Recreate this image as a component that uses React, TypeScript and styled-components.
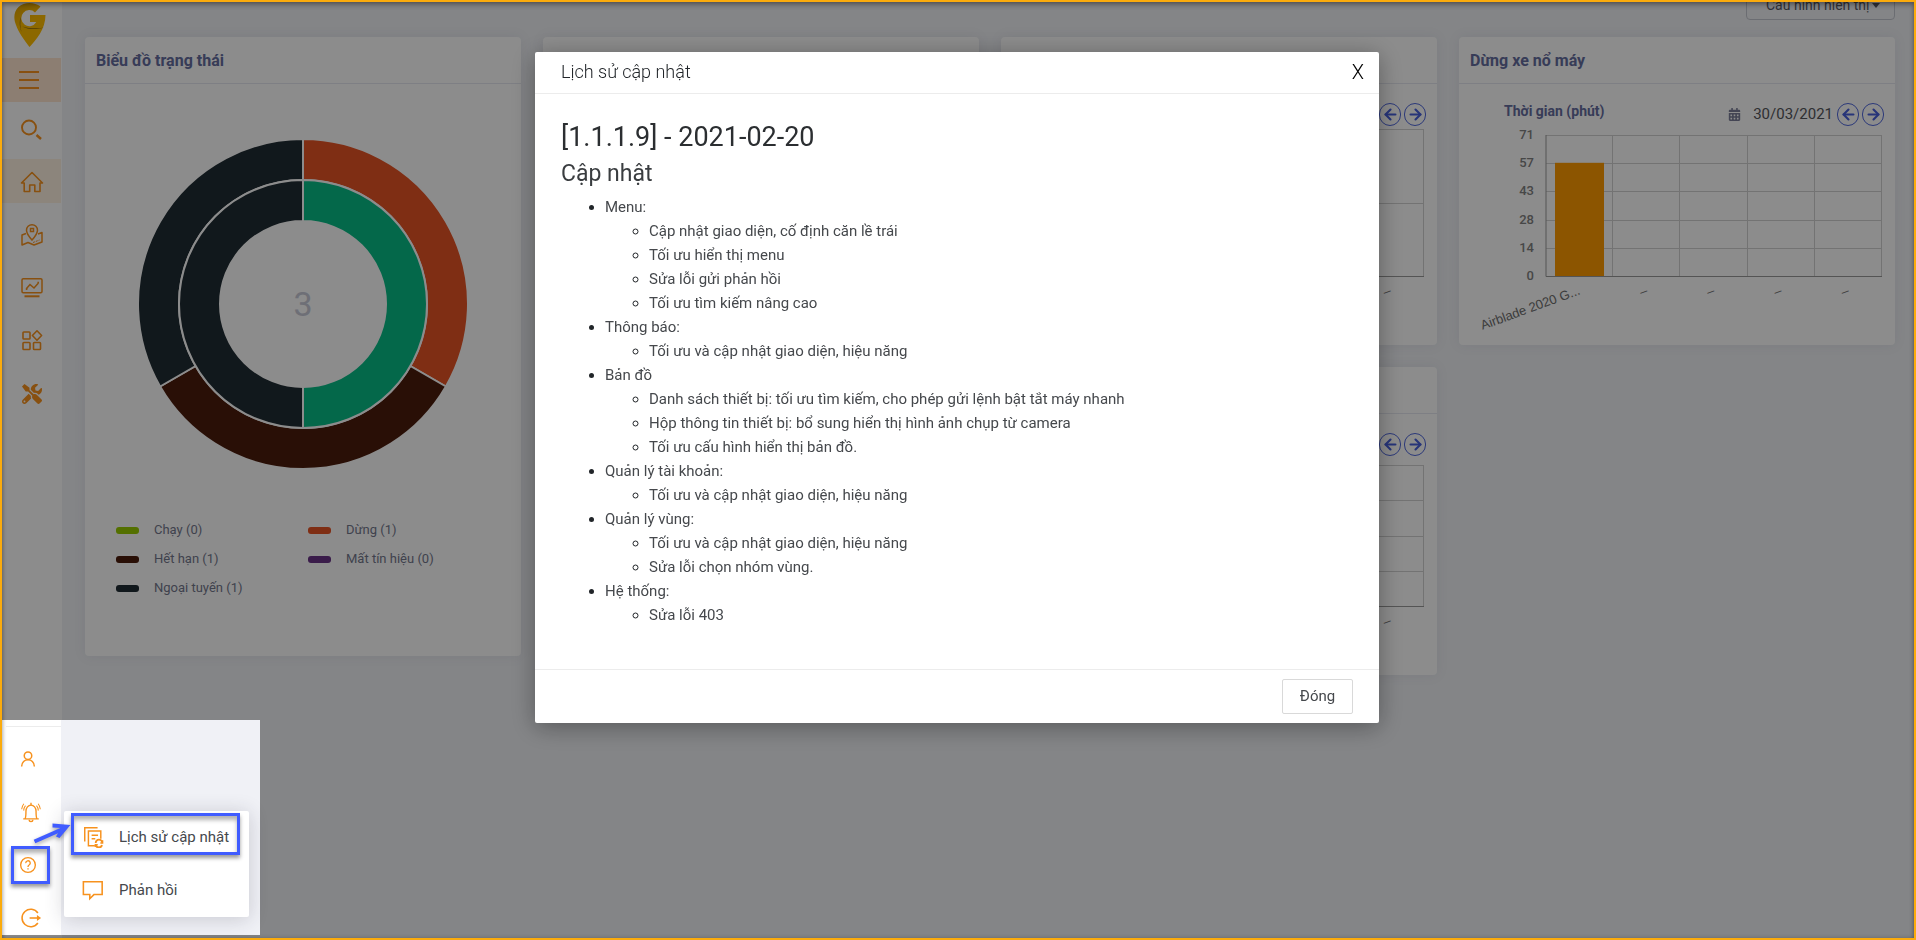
import React from "react";
import styled, { createGlobalStyle } from "styled-components";
import { FaCalendarAlt, FaTools } from "react-icons/fa";
import { ArrowLeft, ArrowRight } from "lucide-react";

const ORANGE = "#f7921e";
const BLUE = "#405cff";

const GlobalStyle = createGlobalStyle`
  *, *::before, *::after { box-sizing: border-box; }
  body {
    margin: 0;
    background: #f0f2f6;
    font-family: Roboto, "Liberation Sans", sans-serif;
    font-size: 15px;
    color: #212529;
  }
  button { font-family: inherit; cursor: pointer; }
  h1, h2, h3, ul { margin: 0; padding: 0; }
`;

const Page = styled.div`
  display: flex;
  min-height: 100vh;
  padding: 2px;
`;

const Frame = styled.div`
  position: fixed;
  inset: 0;
  z-index: 40;
  border: 2px solid #fbab0c;
  box-shadow: inset 0 3px 5px rgba(0, 0, 0, 0.3), inset 0 0 4px rgba(0, 0, 0, 0.2);
  pointer-events: none;
`;

/* ---------- sidebar ---------- */

const Sidebar = styled.aside`
  flex: 0 0 60px;
  background: #fff;
  display: flex;
  flex-direction: column;
`;

const Brand = styled.a`
  display: flex;
  justify-content: center;
  height: 56px;
  padding-right: 4px;
`;

const Toggle = styled.button`
  display: flex;
  align-items: center;
  height: 44px;
  margin: 0 1px 4px 0;
  padding: 0 0 0 16px;
  border: 0;
  background: #ffe6cf;
  color: ${ORANGE};
`;

const NavList = styled.nav`
  display: flex;
  flex-direction: column;
  gap: 9px;
`;

const NavItem = styled.a<{ $active?: boolean }>`
  display: flex;
  align-items: center;
  justify-content: center;
  height: 44px;
  margin-right: 1px;
  padding-top: 2px;
  color: ${ORANGE};
  background: ${(p) => (p.$active ? "#fff3e2" : "transparent")};
`;

/* ---------- content ---------- */

const Main = styled.main`
  flex: 1;
  min-width: 0;
  padding: 0 19px 0 23px;
`;

const Toolbar = styled.div`
  display: flex;
  justify-content: flex-end;
  align-items: flex-end;
  height: 18px;
  margin-bottom: 17px;
`;

const ConfigButton = styled.button`
  flex: none;
  display: flex;
  align-items: center;
  justify-content: space-between;
  width: 149px;
  height: 30px;
  padding: 0 14px 0 19px;
  border: 1px solid #c4c7cf;
  border-radius: 4px;
  background: transparent;
  color: #5a5b66;
  font-size: 14px;
`;

const Grid = styled.div`
  display: grid;
  grid-template-columns: repeat(4, minmax(0, 1fr));
  gap: 22px;
  align-items: start;
`;

const Column = styled.div`
  display: flex;
  flex-direction: column;
  gap: 22px;
`;

const Card = styled.section<{ $tall?: boolean }>`
  height: ${(p) => (p.$tall ? 619 : 308)}px;
  background: #fff;
  border-radius: 4px;
  box-shadow: 0 0 13px rgba(82, 63, 105, 0.08);
`;

const CardTitle = styled.h3`
  height: 47px;
  padding: 0 11px;
  border-bottom: 1px solid #e6e8f0;
  line-height: 48px;
  font-size: 16px;
  font-weight: 700;
  color: #656d9f;
`;

const Doughnut = styled.svg`
  display: block;
  width: 100%;
  height: 432px;
`;

const Legend = styled.ul`
  display: grid;
  grid-template-columns: 192px 1fr;
  row-gap: 5px;
  padding: 2px 31px;
  list-style: none;
`;

const LegendItem = styled.li`
  display: flex;
  align-items: center;
  gap: 15px;
  line-height: 24px;
  font-size: 13px;
  color: #74788d;
`;

const Swatch = styled.span<{ $color: string }>`
  width: 23px;
  height: 7px;
  border-radius: 3px;
  background: ${(p) => p.$color};
`;

const ChartHead = styled.div`
  display: flex;
  align-items: center;
  height: 44px;
  padding: 16px 11px 0 45px;
`;

const ChartLabel = styled.span`
  flex: 1;
  padding-bottom: 6px;
  font-size: 14px;
  font-weight: 700;
  color: #656d9f;
`;

const DateText = styled.span`
  display: flex;
  align-items: center;
  gap: 12px;
  margin-right: 4px;
  font-size: 15px;
  color: #55565c;
  svg { color: #7c7f99; }
`;

const RoundButton = styled.button`
  display: flex;
  align-items: center;
  justify-content: center;
  width: 22px;
  height: 23px;
  margin-right: 3px;
  padding: 0;
  border: 1px solid #5068dc;
  border-radius: 11px;
  background: transparent;
  color: #4760dc;
  &:last-child { margin-right: 0; }
`;

const Plot = styled.svg`
  display: block;
  width: 100%;
  overflow: visible;
  font-family: Roboto, sans-serif;
`;

/* ---------- modal ---------- */

const Mask = styled.div`
  position: fixed;
  inset: 0;
  z-index: 10;
  display: flex;
  justify-content: center;
  align-items: flex-start;
  padding: 52px 2px 0 0;
  background: rgba(0, 0, 0, 0.45);
`;

const Dialog = styled.div`
  width: 844px;
  background: #fff;
  border-radius: 2px;
  box-shadow: 0 4px 24px rgba(0, 0, 0, 0.35);
`;

const DialogHead = styled.header`
  display: flex;
  align-items: center;
  justify-content: space-between;
  height: 42px;
  padding: 0 15px 1px 26px;
  border-bottom: 1px solid #ececec;
`;

const DialogTitle = styled.h1`
  font-size: 18px;
  font-weight: 300;
  line-height: 24px;
`;

const CloseButton = styled.button`
  padding: 0;
  border: 0;
  background: none;
  font-size: 20px;
  font-weight: 300;
  line-height: 24px;
  color: #000;
`;

const DialogBody = styled.div`
  padding: 23px 26px 42px;
`;

const Version = styled.h2`
  font-size: 27px;
  font-weight: 400;
  line-height: 40px;
  color: #2b2e31;
`;

const Section = styled.h3`
  margin-bottom: 4px;
  font-size: 23px;
  font-weight: 400;
  line-height: 34px;
  color: #3a3d40;
`;

const Changes = styled.ul`
  padding-left: 44px;
  line-height: 24px;
  font-size: 15px;
  color: #45484c;
  li::marker { color: #212529; }
`;

const DialogFoot = styled.footer`
  display: flex;
  justify-content: flex-end;
  padding: 9px 26px;
  border-top: 1px solid #ececec;
`;

const ActionButton = styled.button`
  width: 71px;
  height: 35px;
  padding: 0 0 2px;
  border: 1px solid #d9d9d9;
  border-radius: 2px;
  background: #fff;
  font-size: 15px;
  color: #45484c;
`;

/* ---------- highlighted help area ---------- */

const Spotlight = styled.div`
  position: fixed;
  left: 2px;
  bottom: 5px;
  z-index: 20;
  display: flex;
  width: 258px;
  height: 215px;
  background: #f0f1f6;
`;

const UserNav = styled.nav`
  width: 59px;
  padding-top: 6px;
  background: #fff;
`;

const UserNavList = styled.div`
  display: flex;
  flex-direction: column;
  gap: 9px;
  margin-left: 4px;
  padding-top: 10px;
  border-top: 1px solid #ececec;
`;

const UserItem = styled.a<{ $wide?: boolean }>`
  display: flex;
  align-items: center;
  justify-content: center;
  height: 44px;
  padding-right: ${(p) => (p.$wide ? 6 : 11)}px;
  color: ${ORANGE};
`;

const Popup = styled.div`
  position: absolute;
  left: 62px;
  top: 91px;
  width: 185px;
  background: #fff;
  border-radius: 2px;
  box-shadow: 0 2px 20px rgba(40, 40, 60, 0.2);
`;

const PopupItem = styled.a`
  display: flex;
  align-items: center;
  gap: 15px;
  height: 53px;
  padding: 0 0 1px 18px;
  font-size: 15px;
  color: #45484c;
  text-decoration: none;
  svg { color: ${ORANGE}; }
`;

const Marker = styled.div<{ $x: number; $y: number; $w: number; $h: number }>`
  position: absolute;
  left: ${(p) => p.$x}px;
  top: ${(p) => p.$y}px;
  width: ${(p) => p.$w}px;
  height: ${(p) => p.$h}px;
  border: 3px solid ${BLUE};
  box-shadow: 0 3px 4px rgba(0, 0, 0, 0.4), inset 0 4px 4px rgba(0, 0, 0, 0.3);
  pointer-events: none;
`;

const Pointer = styled.svg`
  position: absolute;
  left: 28px;
  top: 100px;
  filter: drop-shadow(0 2px 2px rgba(0, 0, 0, 0.35));
`;

/* ---------- icons ---------- */

function Icon({ size = 24, width = 1.6, children }: { size?: number; width?: number; children: React.ReactNode }) {
  return (
    <svg width={size} height={size} viewBox="0 0 24 24" fill="none" stroke="currentColor" strokeWidth={width} aria-hidden="true">
      {children}
    </svg>
  );
}

const Logo = () => (
  <svg width="32" height="46" viewBox="0 0 32 46" aria-hidden="true">
    <defs>
      <linearGradient id="pin" x1="0" y1="0" x2="0.4" y2="1">
        <stop offset="0" stopColor="#dc9f00" />
        <stop offset="0.5" stopColor="#ffbd00" />
      </linearGradient>
    </defs>
    <path d="M26.500 4.500C21 0 10 -0.500 4.500 5C-0.500 10 -0.500 17 2 23C4.500 30 10 38 15.500 45C22 38 31.500 27 31.500 13H16V20H22.300A8 8 0 1 1 21 10.500Z" fill="url(#pin)" />
    <path d="M7 15C6 20 6 25 7.500 30C5.500 25 5 19 7 15ZM8 24.500C15 26.500 22 27 30 25.500C22 28 14 27.500 8 24.500Z" fill="#8a6a10" />
  </svg>
);

const MenuIcon = () => (
  <Icon width={2}>
    <path d="M1 4H21M1 12H21M1 20H21" />
  </Icon>
);
const SearchIcon = () => (
  <Icon width={1.900}>
    <circle cx="9" cy="10.500" r="7" />
    <path d="M16.500 18L21 22" strokeWidth={2.400} />
  </Icon>
);
const HomeIcon = () => (
  <Icon>
    <path d="M1.500 13L12 2.500L22.500 13H20V21.500H14.800V15H9.700V21.500H4.200V13Z" strokeLinejoin="round" />
  </Icon>
);
const MapIcon = () => (
  <Icon width={1.500}>
    <path d="M12 17C8 12.500 6.500 10 6.500 7.200A5.500 5.500 0 0 1 17.500 7.200C17.500 10 16 12.500 12 17Z" />
    <rect x="10.500" y="5.500" width="3" height="3" />
    <path d="M6 10.500L2 12V22L8 19.500L14 22L22 19V9.500L18 11" strokeLinejoin="round" />
    <path d="M13 19.500L19.500 17" strokeWidth={1} strokeDasharray="2 1" />
  </Icon>
);
const MonitorIcon = () => (
  <Icon width={1.500}>
    <rect x="2" y="2.800" width="20" height="14" rx="1.200" />
    <path d="M4.500 20.300H19.500" strokeWidth={2} />
    <path d="M6.500 12.500L10 8.500L14 12L18 7.500" />
    <path d="M5.800 13H7.400M17.400 6.800H19" strokeWidth={2} />
  </Icon>
);
const AppsIcon = () => (
  <Icon width={1.600}>
    <rect x="3" y="3" width="7" height="7" rx="0.800" />
    <rect x="3" y="13.500" width="7" height="7" rx="0.800" />
    <rect x="13.500" y="13.500" width="7" height="7" rx="0.800" />
    <path d="M17 1.800L21.600 6.500L17 11.200L12.400 6.500Z" strokeLinejoin="round" />
  </Icon>
);
const UserIcon = () => (
  <Icon size={18} width={2}>
    <circle cx="12" cy="7.500" r="5" />
    <path d="M3.500 22C3.500 10 20.500 10 20.500 22" />
  </Icon>
);
const BellIcon = () => (
  <Icon size={22} width={1.500}>
    <path d="M3.500 19.500H20.500M5.500 19.500C6.500 18 6.500 15 6.500 11A5.500 6.500 0 0 1 17.500 11C17.500 15 17.500 18 18.500 19.500" />
    <path d="M12 2V4.500M10 20.500A2 2 0 0 0 14 20.500" />
    <path d="M6 5Q4.200 7 4 10.500M4.200 3Q2.200 5.500 1.800 9M18 5Q19.800 7 20 10.500M19.800 3Q21.800 5.500 22.200 9" strokeWidth={1.100} />
  </Icon>
);
const HelpIcon = () => (
  <Icon size={18} width={1.800}>
    <circle cx="12" cy="12" r="9.800" />
    <path d="M9 9.500A3 3 0 1 1 13.500 12C12.300 12.700 12 13.300 12 14.500M12 16.200V18" />
  </Icon>
);
const LogoutIcon = () => (
  <Icon size={22} width={1.700}>
    <path d="M19.500 6.500A9.500 9.500 0 1 0 19.500 17.500" />
    <path d="M10.500 12H20" />
    <path d="M18.500 8.800L23 12L18.500 15.200Z" fill="currentColor" stroke="none" />
  </Icon>
);
const HistoryIcon = () => (
  <Icon size={22} width={1.600}>
    <path d="M3 17V2H17" />
    <path d="M14 21.500H7V5.500H20.500V14" />
    <path d="M10.500 10H17.500M10.500 14H14.500" />
    <path d="M22.500 15.500V18.500H20M14.500 23V20.500H17.200" strokeWidth={1.500} />
    <path d="M15 18.500A3.500 3.500 0 0 1 22 18.300M15 20.800A3.500 3.500 0 0 0 21.800 20.800" strokeWidth={2} />
  </Icon>
);
const BubbleIcon = () => (
  <Icon size={22} width={1.700}>
    <path d="M1.500 3H22V17H13L8.500 21.500V17H1.500Z" />
  </Icon>
);

/* ---------- charts ---------- */

function ring(r0: number, r1: number, from: number, to: number) {
  const pt = (r: number, a: number) => {
    const t = ((a - 90) * Math.PI) / 180;
    return `${(218 + r * Math.cos(t)).toFixed(2)} ${(220 + r * Math.sin(t)).toFixed(2)}`;
  };
  const large = to - from > 180 ? 1 : 0;
  return `M${pt(r1, from)}A${r1} ${r1} 0 ${large} 1 ${pt(r1, to)}L${pt(r0, to)}A${r0} ${r0} 0 ${large} 0 ${pt(r0, from)}Z`;
}

const slices = [
  { r: [124, 165], a: [0, 120], color: "#e85426" },
  { r: [124, 165], a: [120, 240], color: "#4c1c0c" },
  { r: [124, 165], a: [240, 360], color: "#202c33" },
  { r: [83, 124], a: [0, 180], color: "#09bd88" },
  { r: [83, 124], a: [180, 360], color: "#202c33" },
];

const legend = [
  { label: "Chạy (0)", color: "#9acd00" },
  { label: "Dừng (1)", color: "#e85426" },
  { label: "Hết hạn (1)", color: "#4c1c0c" },
  { label: "Mất tín hiệu (0)", color: "#6a3488" },
  { label: "Ngoại tuyến (1)", color: "#202c33" },
];

function StatusChart() {
  return (
    <>
      <Doughnut viewBox="0 0 436 432" role="img" aria-label="Biểu đồ trạng thái">
        {slices.map((s, i) => (
          <path key={i} d={ring(s.r[0], s.r[1], s.a[0], s.a[1])} fill={s.color} stroke="#fff" strokeWidth="2" />
        ))}
        <text x="218" y="232" textAnchor="middle" fontSize="34" fill="#c8cad8">3</text>
      </Doughnut>
      <Legend>
        {legend.map((l) => (
          <LegendItem key={l.label}>
            <Swatch $color={l.color} />
            {l.label}
          </LegendItem>
        ))}
      </Legend>
    </>
  );
}

const LEFT = 87;
const RIGHT = 423;
const BOTTOM = 148;

interface BarProps {
  top: number;
  ticks: string[];
  values?: number[];
  names: string[];
  max: number;
}

function BarChart({ top, ticks, values = [], names, max }: BarProps) {
  const step = (RIGHT - LEFT) / 5;
  const rows = ticks.length - 1;
  return (
    <Plot viewBox="0 0 436 217">
      <g stroke="#d2d2d2" strokeWidth="1">
        {ticks.map((t, i) => {
          const y = Math.round(top + ((BOTTOM - top) * i) / rows) + 0.5;
          return <line key={t} x1={LEFT} x2={RIGHT} y1={y} y2={y} />;
        })}
        {[1, 2, 3, 4, 5].map((i) => {
          const x = Math.round(LEFT + step * i) - 0.5;
          return <line key={i} x1={x} x2={x} y1={top} y2={BOTTOM} />;
        })}
      </g>
      {values.map((v, i) => {
        const h = ((BOTTOM - top) * v) / max;
        return <rect key={i} x={LEFT + step * i + 9} y={BOTTOM - h} width="49" height={h} fill="#ff9c00" />;
      })}
      <path d={`M${LEFT} ${top}V${BOTTOM}.5H${RIGHT}`} fill="none" stroke="#9a9a9a" strokeWidth="1" />
      {ticks.map((t, i) => (
        <text key={t} x="75" y={top + ((BOTTOM - top) * i) / rows + 4} textAnchor="end" fontSize="13" fontWeight="500" fill="#828282">
          {t}
        </text>
      ))}
      {names.map((n, i) => {
        const x = LEFT + step * i + 35;
        return (
          <text key={i} x={x} y={BOTTOM + 18} transform={`rotate(-20 ${x} ${BOTTOM + 18})`} textAnchor="end" fontSize="13" fontFamily="Liberation Sans" fill="#6e6e6e">
            {n}
          </text>
        );
      })}
    </Plot>
  );
}

function ChartCard({ title, label, ...bars }: BarProps & { title: string; label: string }) {
  return (
    <Card>
      <CardTitle>{title}</CardTitle>
      <ChartHead>
        <ChartLabel>{label}</ChartLabel>
        <DateText>
          <FaCalendarAlt size={13} />
          30/03/2021
        </DateText>
        <RoundButton aria-label="Ngày trước"><ArrowLeft size={17} strokeWidth={3} /></RoundButton>
        <RoundButton aria-label="Ngày sau"><ArrowRight size={17} strokeWidth={3} /></RoundButton>
      </ChartHead>
      <BarChart {...bars} />
    </Card>
  );
}

/* ---------- data ---------- */

const changes = [
  { name: "Menu:", items: ["Cập nhật giao diện, cố định căn lề trái", "Tối ưu hiển thị menu", "Sửa lỗi gửi phản hồi", "Tối ưu tìm kiếm nâng cao"] },
  { name: "Thông báo:", items: ["Tối ưu và cập nhật giao diện, hiệu năng"] },
  {
    name: "Bản đồ",
    items: [
      "Danh sách thiết bị: tối ưu tìm kiếm, cho phép gửi lệnh bật tắt máy nhanh",
      "Hộp thông tin thiết bị: bổ sung hiển thị hình ảnh chụp từ camera",
      "Tối ưu cấu hình hiển thị bản đồ.",
    ],
  },
  { name: "Quản lý tài khoản:", items: ["Tối ưu và cập nhật giao diện, hiệu năng"] },
  { name: "Quản lý vùng:", items: ["Tối ưu và cập nhật giao diện, hiệu năng", "Sửa lỗi chọn nhóm vùng."] },
  { name: "Hệ thống:", items: ["Sửa lỗi 403"] },
];

const navItems = [
  { name: "Tìm kiếm", icon: <SearchIcon /> },
  { name: "Trang chủ", icon: <HomeIcon />, active: true },
  { name: "Bản đồ", icon: <MapIcon /> },
  { name: "Giám sát", icon: <MonitorIcon /> },
  { name: "Tiện ích", icon: <AppsIcon /> },
  { name: "Công cụ", icon: <FaTools size={20} /> },
];

const dashes = ["–", "–", "–", "–", "–"];

export default function App() {
  return (
    <>
      <GlobalStyle />
      <Page>
        <Sidebar>
          <Brand href="#" aria-label="Trang chủ"><Logo /></Brand>
          <Toggle aria-label="Thu gọn menu"><MenuIcon /></Toggle>
          <NavList>
            {navItems.map((n) => (
              <NavItem key={n.name} href="#" aria-label={n.name} $active={n.active}>{n.icon}</NavItem>
            ))}
          </NavList>
        </Sidebar>
        <Main>
          <Toolbar>
            <ConfigButton>
              Cấu hình hiển thị
              <svg width="8" height="5" viewBox="0 0 8 5" aria-hidden="true"><path d="M0 0H8L4 5Z" fill="currentColor" /></svg>
            </ConfigButton>
          </Toolbar>
          <Grid>
            <Card $tall>
              <CardTitle>Biểu đồ trạng thái</CardTitle>
              <StatusChart />
            </Card>
            <Card />
            <Column>
              <ChartCard title="" label="" top={1} max={2} ticks={["2", "1", "0"]} names={dashes} />
              <ChartCard title="" label="" top={7} max={4} ticks={["4", "3", "2", "1", "0"]} names={dashes} />
            </Column>
            <ChartCard
              title="Dừng xe nổ máy"
              label="Thời gian (phút)"
              top={7}
              max={71}
              ticks={["71", "57", "43", "28", "14", "0"]}
              values={[57]}
              names={["Airblade 2020 G...", "–", "–", "–", "–"]}
            />
          </Grid>
        </Main>
      </Page>

      <Mask>
        <Dialog role="dialog" aria-modal="true" aria-labelledby="history-title">
          <DialogHead>
            <DialogTitle id="history-title">Lịch sử cập nhật</DialogTitle>
            <CloseButton aria-label="Đóng cửa sổ">X</CloseButton>
          </DialogHead>
          <DialogBody>
            <Version>[1.1.1.9] - 2021-02-20</Version>
            <Section>Cập nhật</Section>
            <Changes>
              {changes.map((c) => (
                <li key={c.name}>
                  {c.name}
                  <Changes>
                    {c.items.map((t) => <li key={t}>{t}</li>)}
                  </Changes>
                </li>
              ))}
            </Changes>
          </DialogBody>
          <DialogFoot>
            <ActionButton>Đóng</ActionButton>
          </DialogFoot>
        </Dialog>
      </Mask>

      <Spotlight>
        <UserNav>
          <UserNavList>
            <UserItem href="#" aria-label="Tài khoản"><UserIcon /></UserItem>
            <UserItem href="#" aria-label="Thông báo" $wide><BellIcon /></UserItem>
            <UserItem href="#" aria-label="Trợ giúp"><HelpIcon /></UserItem>
            <UserItem href="#" aria-label="Đăng xuất" $wide><LogoutIcon /></UserItem>
          </UserNavList>
        </UserNav>
        <Popup>
          <PopupItem href="#"><HistoryIcon />Lịch sử cập nhật</PopupItem>
          <PopupItem href="#"><BubbleIcon />Phản hồi</PopupItem>
        </Popup>
        <Marker $x={69} $y={93} $w={169} $h={42} />
        <Marker $x={9} $y={126} $w={39} $h={38} />
        <Pointer width="44" height="28" viewBox="0 0 44 28" aria-hidden="true">
          <path d="M4.500 21.500L34 8.500" stroke={BLUE} strokeWidth="4" />
          <path d="M40.500 5L22.500 3.500V7.500L31 8L26 16.500L29.500 18Z" fill={BLUE} />
        </Pointer>
      </Spotlight>
      <Frame />
    </>
  );
}
